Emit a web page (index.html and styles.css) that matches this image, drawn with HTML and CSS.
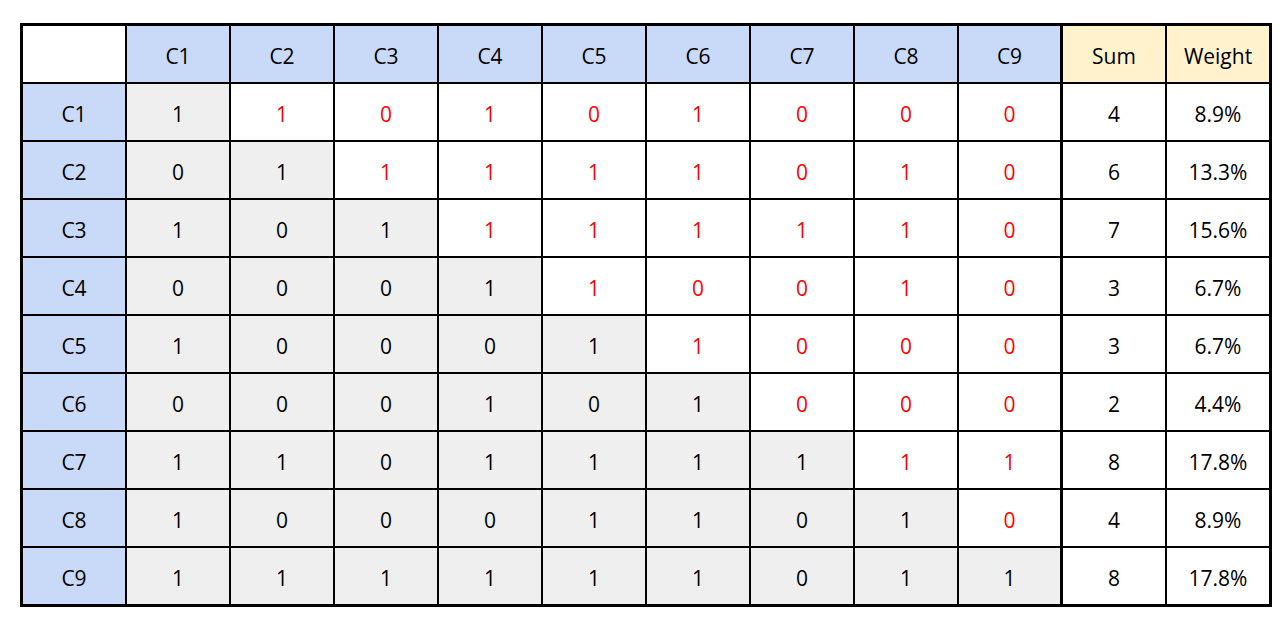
FILE: index.html
```html
<!DOCTYPE html>
<html>
<head>
<meta charset="utf-8">
<link rel="stylesheet" href="styles.css">
</head>
<body>
<table class="matrix">
<thead>
<tr>
<th class="corner"></th>
<th class="hd">C1</th><th class="hd">C2</th><th class="hd">C3</th><th class="hd">C4</th><th class="hd">C5</th><th class="hd">C6</th><th class="hd">C7</th><th class="hd">C8</th><th class="hd last9">C9</th>
<th class="sum hy">Sum</th><th class="wt hy">Weight</th>
</tr>
</thead>
<tbody>
<tr><th class="rh">C1</th><td class="g">1</td><td class="r">1</td><td class="r">0</td><td class="r">1</td><td class="r">0</td><td class="r">1</td><td class="r">0</td><td class="r">0</td><td class="r last9">0</td><td class="sum">4</td><td class="wt">8.9%</td></tr>
<tr><th class="rh">C2</th><td class="g">0</td><td class="g">1</td><td class="r">1</td><td class="r">1</td><td class="r">1</td><td class="r">1</td><td class="r">0</td><td class="r">1</td><td class="r last9">0</td><td class="sum">6</td><td class="wt">13.3%</td></tr>
<tr><th class="rh">C3</th><td class="g">1</td><td class="g">0</td><td class="g">1</td><td class="r">1</td><td class="r">1</td><td class="r">1</td><td class="r">1</td><td class="r">1</td><td class="r last9">0</td><td class="sum">7</td><td class="wt">15.6%</td></tr>
<tr><th class="rh">C4</th><td class="g">0</td><td class="g">0</td><td class="g">0</td><td class="g">1</td><td class="r">1</td><td class="r">0</td><td class="r">0</td><td class="r">1</td><td class="r last9">0</td><td class="sum">3</td><td class="wt">6.7%</td></tr>
<tr><th class="rh">C5</th><td class="g">1</td><td class="g">0</td><td class="g">0</td><td class="g">0</td><td class="g">1</td><td class="r">1</td><td class="r">0</td><td class="r">0</td><td class="r last9">0</td><td class="sum">3</td><td class="wt">6.7%</td></tr>
<tr><th class="rh">C6</th><td class="g">0</td><td class="g">0</td><td class="g">0</td><td class="g">1</td><td class="g">0</td><td class="g">1</td><td class="r">0</td><td class="r">0</td><td class="r last9">0</td><td class="sum">2</td><td class="wt">4.4%</td></tr>
<tr><th class="rh">C7</th><td class="g">1</td><td class="g">1</td><td class="g">0</td><td class="g">1</td><td class="g">1</td><td class="g">1</td><td class="g">1</td><td class="r">1</td><td class="r last9">1</td><td class="sum">8</td><td class="wt">17.8%</td></tr>
<tr><th class="rh">C8</th><td class="g">1</td><td class="g">0</td><td class="g">0</td><td class="g">0</td><td class="g">1</td><td class="g">1</td><td class="g">0</td><td class="g">1</td><td class="r last9">0</td><td class="sum">4</td><td class="wt">8.9%</td></tr>
<tr class="lastrow"><th class="rh">C9</th><td class="g">1</td><td class="g">1</td><td class="g">1</td><td class="g">1</td><td class="g">1</td><td class="g">1</td><td class="g">0</td><td class="g">1</td><td class="g last9">1</td><td class="sum">8</td><td class="wt">17.8%</td></tr>
</tbody>
</table>
</body>
</html>
```

FILE: styles.css
```css
html, body {
  margin: 0;
  padding: 0;
  background: #ffffff;
}
body {
  padding: 23px 0 0 20px;
  font-family: "Open Sans", "Liberation Sans", sans-serif;
}
.matrix {
  border-collapse: separate;
  border-spacing: 0;
  border: 3px solid #000;
  table-layout: fixed;
  width: 1252px;
  font-size: 21px;
  color: #000;
}
.matrix th,
.matrix td {
  box-sizing: border-box;
  width: 104px;
  height: 58px;
  padding: 3px 0 0 0;
  text-align: center;
  vertical-align: middle;
  font-weight: normal;
  line-height: 24px;
  border-right: 2px solid #000;
  border-bottom: 2px solid #000;
  background: #ffffff;
}
.matrix .lastrow th,
.matrix .lastrow td {
  border-bottom: none;
  height: 56px;
}
.matrix .wt {
  width: 102px;
  border-right: none;
}
.matrix .last9 {
  border-right: 3px solid #000;
}
.matrix .hd,
.matrix .rh {
  background: #c9daf8;
}
.matrix .hy {
  background: #fff2cc;
}
.matrix .g {
  background: #efefef;
}
.matrix .r {
  color: #ff0000;
}
```
